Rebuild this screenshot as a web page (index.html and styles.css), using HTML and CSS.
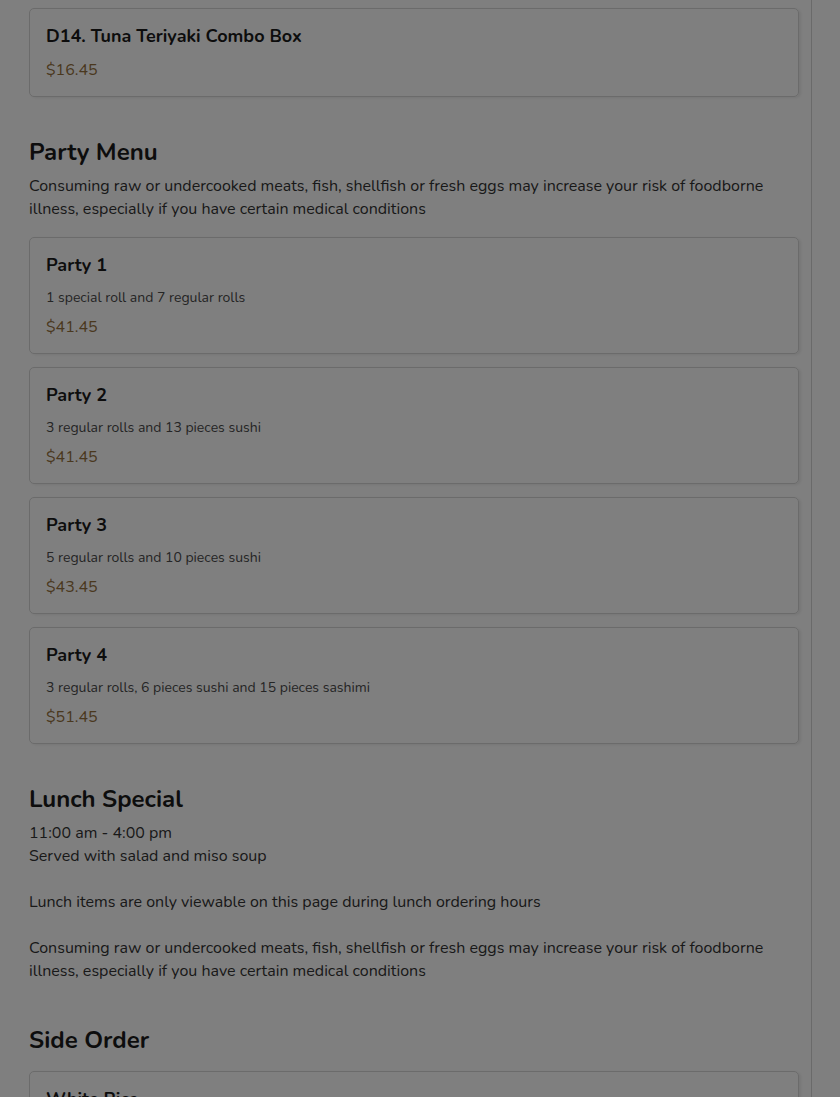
FILE: index.html
```html
<!DOCTYPE html>
<html lang="en">
<head>
<meta charset="utf-8">
<title>Menu</title>
<link rel="stylesheet" href="styles.css">
</head>
<body>
<div class="page">
  <main class="menu">
    <div class="items">
      <article class="card">
        <h3 class="card-title">D14. Tuna Teriyaki Combo Box</h3>
        <div class="price">$16.45</div>
      </article>
    </div>

    <section class="category">
      <h2 class="cat-title">Party Menu</h2>
      <p class="cat-desc">Consuming raw or undercooked meats, fish, shellfish or fresh eggs may increase your risk of foodborne illness, especially if you have certain medical conditions</p>
      <div class="items">
        <article class="card">
          <h3 class="card-title">Party 1</h3>
          <p class="card-desc">1 special roll and 7 regular rolls</p>
          <div class="price">$41.45</div>
        </article>
        <article class="card">
          <h3 class="card-title">Party 2</h3>
          <p class="card-desc">3 regular rolls and 13 pieces sushi</p>
          <div class="price">$41.45</div>
        </article>
        <article class="card">
          <h3 class="card-title">Party 3</h3>
          <p class="card-desc">5 regular rolls and 10 pieces sushi</p>
          <div class="price">$43.45</div>
        </article>
        <article class="card">
          <h3 class="card-title">Party 4</h3>
          <p class="card-desc">3 regular rolls, 6 pieces sushi and 15 pieces sashimi</p>
          <div class="price">$51.45</div>
        </article>
      </div>
    </section>

    <section class="category">
      <h2 class="cat-title">Lunch Special</h2>
      <p class="cat-desc">11:00 am - 4:00 pm<br>Served with salad and miso soup<br><br>Lunch items are only viewable on this page during lunch ordering hours<br><br>Consuming raw or undercooked meats, fish, shellfish or fresh eggs may increase your risk of foodborne illness, especially if you have certain medical conditions</p>
    </section>

    <section class="category">
      <h2 class="cat-title">Side Order</h2>
      <div class="items items-nodesc">
        <article class="card">
          <h3 class="card-title">White Rice</h3>
          <div class="price">$3.00</div>
        </article>
      </div>
    </section>
  </main>
  <aside class="side"></aside>
</div>
<div class="overlay"></div>
</body>
</html>
```

FILE: styles.css
```css
html, body {
  margin: 0;
  padding: 0;
  background: #ffffff;
  font-family: "Nunito", Lato, "Noto Sans", sans-serif;
  color: #222;
  overflow: hidden;
}

.page {
  display: flex;
  min-height: 100vh;
}

.menu {
  width: 770px;
  padding: 8px 12px 0 29px;
  border-right: 1px solid #d4d4d4;
}

.side {
  flex: 1;
}

.items {
  display: flex;
  flex-direction: column;
  gap: 13px;
}

.card {
  border: 1px solid #d6d6d6;
  border-radius: 5px;
  box-shadow: 2px 1px 3px rgba(0,0,0,0.08);
  padding: 15px 16px 14px 16px;
  display: flex;
  flex-direction: column;
}

.card-title {
  margin: 0;
  font-size: 18px;
  font-weight: 700;
  line-height: 24px;
  color: #1a1a1a;
}

.card-desc {
  margin: 11px 0 0;
  font-size: 14px;
  line-height: 20px;
  color: #4a4a4a;
}

.price {
  margin-top: 10px;
  font-size: 16px;
  line-height: 24px;
  color: #94703c;
}

.card-desc + .price {
  margin-top: 7px;
}

.category {
  margin-top: 39px;
  display: flex;
  flex-direction: column;
}

.cat-title {
  margin: 0;
  font-size: 24px;
  font-weight: 700;
  line-height: 32px;
  color: #1a1a1a;
}

.cat-desc {
  margin: 7px 0 2px;
  font-size: 16px;
  line-height: 23px;
  color: #333;
}

.cat-desc + .items {
  margin-top: 14px;
}

.items-nodesc {
  margin-top: 15px;
}

.overlay {
  position: fixed;
  inset: 0;
  background: rgba(0, 0, 0, 0.5);
}
```
